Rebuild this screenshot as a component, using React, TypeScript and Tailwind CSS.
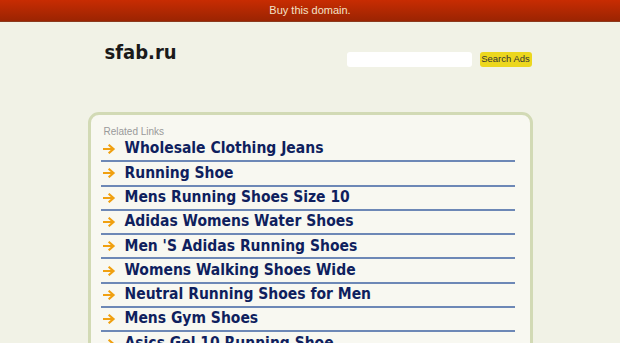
import React from "react";

const links = [
  "Wholesale Clothing Jeans",
  "Running Shoe",
  "Mens Running Shoes Size 10",
  "Adidas Womens Water Shoes",
  "Men 'S Adidas Running Shoes",
  "Womens Walking Shoes Wide",
  "Neutral Running Shoes for Men",
  "Mens Gym Shoes",
  "Asics Gel 10 Running Shoe",
];

function Arrow() {
  return (
    <svg width="13" height="10" viewBox="0 0 13 10" className="shrink-0">
      <path d="M1 5 H10 M6.5 1.5 L10.5 5 L6.5 8.5" stroke="#f0a010" strokeWidth="2.2" fill="none" strokeLinecap="square" />
    </svg>
  );
}

const cond = '"DejaVu Sans Condensed", "DejaVu Sans", sans-serif';

export default function App() {
  return (
    <div className="w-[620px] h-[343px] overflow-hidden bg-[#f1f2e6]" style={{ fontFamily: '"DejaVu Sans", sans-serif' }}>
      <div className="h-[22px] bg-gradient-to-b from-[#c82c02] to-[#9b2402] border-b border-[#8c3a1e] flex items-center justify-center">
        <span className="text-[11px] text-[#f3e3c8]" style={{ fontFamily: '"Liberation Sans", Arial, sans-serif' }}>Buy this domain.</span>
      </div>
      <div className="w-[445px] mx-auto">
        <div className="flex items-start justify-between h-[90px] pl-[17px]">
          <div className="pt-[20px] text-[20px] font-bold text-[#1a1a1a] leading-none" style={{ fontFamily: cond }}>sfab.ru</div>
          <div className="flex items-center pt-[30px] gap-[8px] pr-[1px]">
            <div className="w-[125px] h-[15px] bg-white rounded-[3px]" />
            <div className="w-[52px] h-[15px] bg-[#ecd71e] rounded-[3px] flex items-center justify-center text-[9.5px] text-[#333]" style={{ fontFamily: '"Liberation Sans", Arial, sans-serif' }}>Search Ads</div>
          </div>
        </div>
        <div className="border-[3px] border-[#d2dab5] rounded-[11px] bg-[#f8f8f1] pl-[10px] pr-[15px] pt-[11px] h-[260px]">
          <div className="text-[10px] text-[#9a9a9a] pl-[3px] leading-[12px]" style={{ fontFamily: '"Liberation Sans", Arial, sans-serif' }}>Related Links</div>
          <div>
            {links.map((l) => (
              <div key={l} className="h-[24.3px] border-b-2 border-[#6d88b6] flex items-center pl-[2px]">
                <Arrow />
                <span className="ml-[9px] text-[15.5px] font-bold text-[#0f1f5e] leading-none whitespace-nowrap" style={{ fontFamily: cond }}>{l}</span>
              </div>
            ))}
          </div>
        </div>
      </div>
    </div>
  );
}
